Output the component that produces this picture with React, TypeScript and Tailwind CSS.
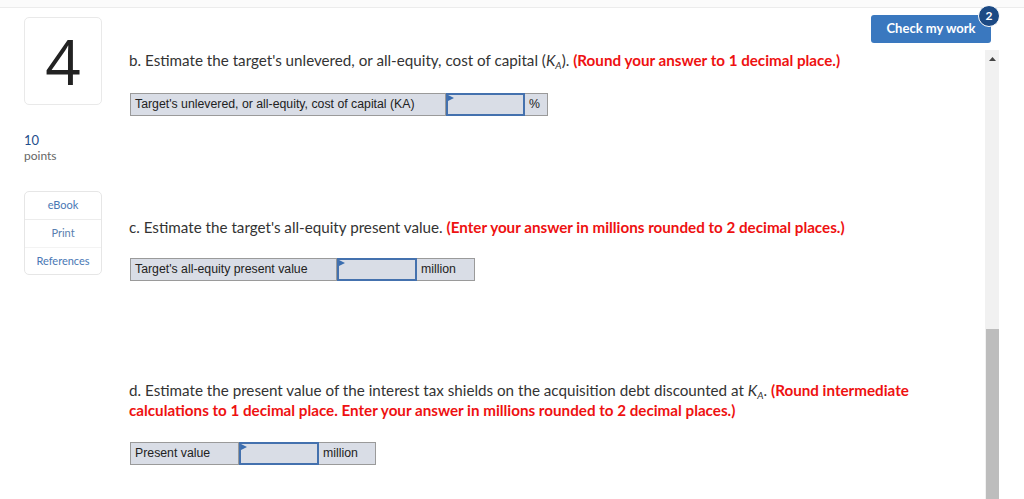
import React from "react";

function Flag() {
  return (
    <svg className="absolute left-0 top-0" width="7" height="7" viewBox="0 0 7 7">
      <polygon points="0,0 6,3 0,6" fill="#3b6eb0" />
    </svg>
  );
}

function AnswerRow({ label, labelW, inputW, unit, unitW }: { label: string; labelW: number; inputW: number; unit: string; unitW: number }) {
  return (
    <div className="flex h-[23px] border border-[#9a9a9a] bg-[#d9dde6] w-fit" style={{ fontFamily: '"Liberation Sans", Arial, sans-serif' }}>
      <div className="flex items-center pl-[4px] text-[12.3px] text-[#222] border-r border-[#9a9a9a]" style={{ width: labelW }}>
        {label}
      </div>
      <div className="relative border-2 border-[#4471ae] -my-px" style={{ width: inputW }}>
        <Flag />
      </div>
      <div className="flex items-center pl-[4px] text-[12.3px] text-[#222]" style={{ width: unitW }}>
        {unit}
      </div>
    </div>
  );
}

export default function App() {
  return (
    <div className="relative w-[1024px] h-[499px] overflow-hidden bg-white text-[#333]" style={{ fontFamily: 'Lato, "Open Sans", sans-serif' }}>
      <div className="h-[8px] border-b border-[#ececec] bg-[#fbfbfb]" />
      <div className="flex h-[491px]">
        {/* left column */}
        <div className="ml-[24px] w-[78px] flex flex-col shrink-0">
          <div className="mt-[9px] h-[88px] rounded-[5px] border border-[#e9e9e9] flex items-center justify-center text-[62px] leading-none text-[#222]" style={{ fontFamily: '"Open Sans", sans-serif', fontWeight: 400 }}>
            4
          </div>
          <div className="mt-[28px] text-[13px] leading-[15px] text-[#1f4e8c]">10</div>
          <div className="text-[12px] leading-[16px] text-[#666]">points</div>
          <div className="mt-[27px] rounded-[5px] border border-[#e6e6e6] flex flex-col text-[11px] text-[#4a78b5]">
            <div className="h-[28px] flex items-center justify-center border-b border-[#ececec]">eBook</div>
            <div className="h-[28px] flex items-center justify-center text-[#5a7fb0] border-b border-[#f3f3f3]">Print</div>
            <div className="h-[26px] flex items-center justify-center">References</div>
          </div>
        </div>

        {/* main area */}
        <div className="flex-1 flex flex-col">
          <div className="h-[42px] flex justify-end items-start">
            <div className="mt-[7px] mr-[33px] relative w-[120px] h-[28px] rounded-[3px] bg-[#3a78bf] text-white text-[13px] font-bold flex items-center justify-center">
              Check my work
              <div className="absolute -right-[9px] -top-[10px] w-[22px] h-[22px] rounded-full bg-[#1c4a84] border border-white text-[12px] font-bold flex items-center justify-center">
                2
              </div>
            </div>
          </div>
          <div className="flex flex-1">
            <div className="ml-[27px] flex-1 flex flex-col text-[15.2px] text-[#333]">
              <div className="mt-[1px] leading-[18px]">
                b. Estimate the target's unlevered, or all-equity, cost of capital (<i>K</i><sub className="italic text-[10px]">A</sub>).{" "}
                <span className="font-bold text-[#ee1111]">(Round your answer to 1 decimal place.)</span>
              </div>
              <div className="mt-[24px] ml-px">
                <AnswerRow label="Target's unlevered, or all-equity, cost of capital (KA)" labelW={315} inputW={79} unit="%" unitW={22} />
              </div>
              <div className="mt-[102px] leading-[18px]">
                c. Estimate the target's all-equity present value.{" "}
                <span className="font-bold text-[#ee1111]">(Enter your answer in millions rounded to 2 decimal places.)</span>
              </div>
              <div className="mt-[22px] ml-px">
                <AnswerRow label="Target's all-equity present value" labelW={206} inputW={80} unit="million" unitW={57} />
              </div>
              <div className="mt-[99px] leading-[20px]">
                d. Estimate the present value of the interest tax shields on the acquisition debt discounted at <i>K</i><sub className="italic text-[10px]">A</sub>.{" "}
                <span className="font-bold text-[#ee1111]">(Round intermediate</span>
                <br />
                <span className="font-bold text-[#ee1111]">calculations to 1 decimal place. Enter your answer in millions rounded to 2 decimal places.)</span>
              </div>
              <div className="mt-[22px] ml-px">
                <AnswerRow label="Present value" labelW={108} inputW={80} unit="million" unitW={56} />
              </div>
            </div>
            {/* scrollbar */}
            <div className="mr-[25px] w-[14px] bg-[#f1f1f1] flex flex-col shrink-0">
              <div className="h-[17px] flex items-center justify-center">
                <svg width="7" height="4" viewBox="0 0 7 4"><polygon points="0,4 3.5,0 7,4" fill="#444" /></svg>
              </div>
              <div className="flex-1" />
              <div className="h-[170px] ml-px bg-[#bdbdbd]" />
            </div>
          </div>
        </div>
      </div>
    </div>
  );
}
